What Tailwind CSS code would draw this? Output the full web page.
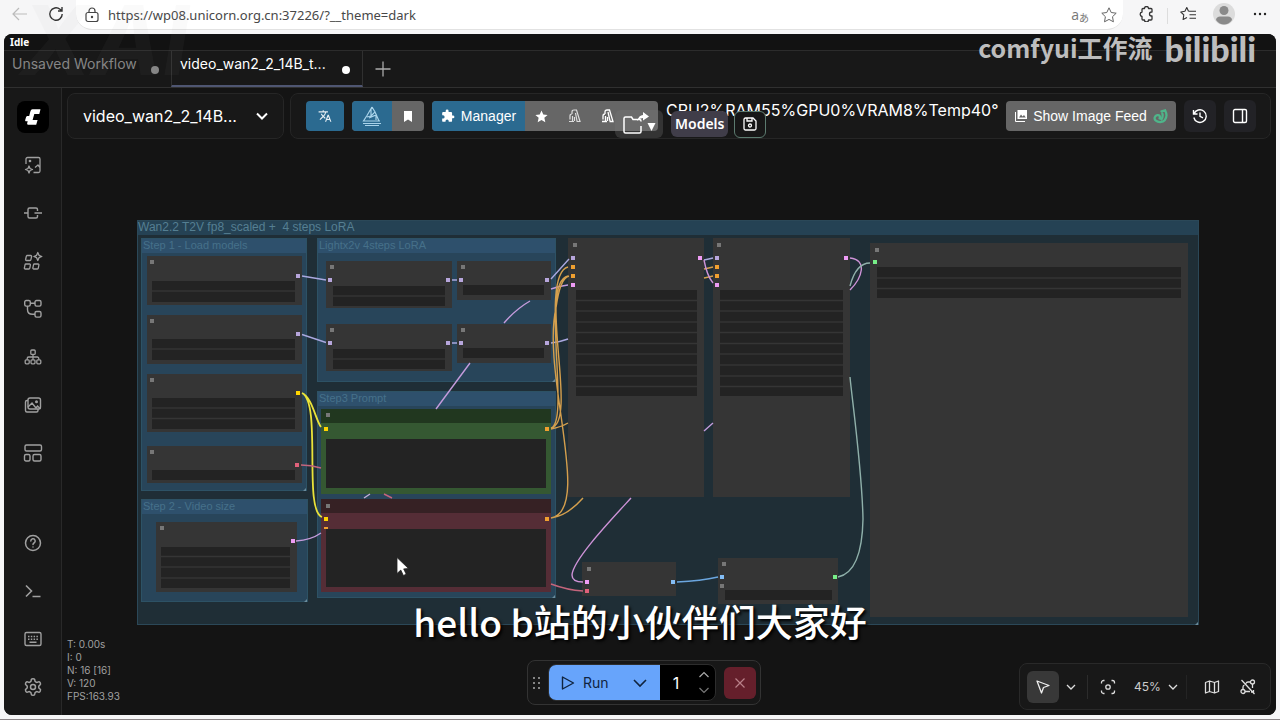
<!DOCTYPE html>
<html lang="en">
<head>
    <meta charset="UTF-8">
    <meta name="viewport" content="width=device-width, initial-scale=1.0">
    <title>ComfyUI</title>
    <script src="https://cdn.jsdelivr.net/npm/@tailwindcss/browser@4"></script>
</head>
<body class="relative h-screen overflow-hidden flex flex-col bg-[#f6f6f7] border-b border-[#8a8486] font-[Inter,'Noto_Sans_CJK_SC',sans-serif] text-white">
    <!-- Browser toolbar -->
    <header class="h-[34px] shrink-0 flex items-start text-[#333] pr-2">
        <button aria-label="Back" class="ml-2 mt-1 w-6 h-5 flex items-center justify-center text-[#bbb]">
            <svg class="w-4 h-4" viewBox="0 0 16 16" fill="none" stroke="currentColor" stroke-width="1.2"><path d="M15 8H1M7 2L1 8l6 6" /></svg>
        </button>
        <button aria-label="Reload" class="ml-3 mt-1 w-6 h-5 flex items-center justify-center">
            <svg class="w-4 h-4" viewBox="0 0 16 16" fill="none" stroke="currentColor" stroke-width="1.4"><path d="M14.2 8A6.2 6.2 0 1 1 12 3.3L14 5M14 1v4h-4" /></svg>
        </button>
        <div class="ml-2 h-[30px] flex-1 flex items-center bg-white rounded-b-2xl border-b border-[#e2e2e2] pl-2 pr-1.5">
            <svg class="w-4 h-4 shrink-0" viewBox="0 0 16 16" fill="none" stroke="#444" stroke-width="1.2"><rect x="2" y="5.5" width="12" height="9" rx="2" /><path d="M5 5.500V4a3 3 0 0 1 6 0v1.500" /><circle cx="8" cy="10" r=".6" fill="#444" /></svg>
            <input aria-label="Address" value="https://wp08.unicorn.org.cn:37226/?__theme=dark"
                class="ml-2 flex-1 min-w-0 outline-none bg-transparent font-['Noto_Sans',sans-serif] text-[13px] leading-5 text-[#484848]">
            <span class="font-['Open_Sans','Noto_Sans_CJK_JP',sans-serif] text-[14px] leading-5 text-[#777]">a<sub class="text-[10px]">あ</sub></span>
            <svg class="ml-3 w-4 h-4" viewBox="0 0 16 16" fill="none" stroke="#666" stroke-linejoin="round"><path d="M8 .8l2.200 4.700 5 .7-3.700 3.500.9 5.100L8 12.400l-4.500 2.400.9-5.100L.8 6.200l5-.7z" /></svg>
        </div>
        <button aria-label="Extensions" class="ml-3 mt-1 w-6 h-5 flex items-center justify-center">
            <svg class="w-4 h-4" viewBox="0 0 16 16" fill="none" stroke="#333" stroke-width="1.3" stroke-linejoin="round"><path d="M4 2.500h1.500a2 2 0 0 1 4 0H12a1 1 0 0 1 1 1v2.500h-.500a2 2 0 0 0 0 4h.500V13a1 1 0 0 1-1 1H9.500a2 2 0 0 1-4 0H4a1 1 0 0 1-1-1v-2.500a2.300 2.300 0 0 1 0-4.500V3.500a1 1 0 0 1 1-1z" /></svg>
        </button>
        <span class="mx-2 mt-2 w-px h-4 bg-[#ddd]"></span>
        <button aria-label="Favorites" class="mt-1 w-6 h-5 flex items-center justify-center">
            <svg class="w-4 h-4" viewBox="0 0 16 16" fill="none" stroke="#333" stroke-width="1.1" stroke-linejoin="round"><path d="M8.500 5.200L6.800 1.500 4.900 5.200.8 6l3 2.900-.7 4.600 3.900-2M8.500 5.200H16M9.500 8.700H16M9.500 12.200H16" /></svg>
        </button>
        <button aria-label="Profile" class="ml-3 mt-1 w-6 h-5 flex items-center justify-center">
            <svg class="w-[22px] h-[22px] shrink-0" viewBox="0 0 22 22"><circle cx="11" cy="11" r="11" fill="#dcdcdc" /><circle cx="11" cy="7.500" r="4.500" fill="#8a8a8a" /><path d="M3 17c0-2 2-3.500 4-3.500h8c2 0 4 1.500 4 3.500-2 3-5 4.500-8 4.500S5 20 3 17z" fill="#8a8a8a" /></svg>
        </button>
        <button aria-label="Settings and more" class="ml-3 mt-1 w-6 h-5 flex items-center justify-center">
            <svg class="w-4 h-4" viewBox="0 0 16 16" fill="#222"><circle cx="3" cy="8" r="1.200" /><circle cx="8" cy="8" r="1.200" /><circle cx="13" cy="8" r="1.200" /></svg>
        </button>
    </header>

    <div class="mx-1 mb-1 flex-1 min-h-0 flex flex-col bg-[#171717] rounded-lg overflow-hidden">
        <!-- Status -->
        <div class="h-[17px] shrink-0 px-1.5 border-b border-[#2c2c2c] bg-[#121212] font-['Noto_Sans',sans-serif] font-bold text-[10px] leading-4">Idle</div>

        <!-- Workflow tabs -->
        <nav class="h-[37px] shrink-0 flex border-b border-[#303030] bg-[#181818] text-[14px] leading-5">
            <button class="w-[167px] pl-2 pr-3 pb-2.5 flex items-center justify-between text-[#858585]">
                <span>Unsaved Workflow</span>
                <span class="mt-3 w-2 h-2 rounded-full bg-[#858585]"></span>
            </button>
            <button class="w-[192px] pl-2 pr-3 pb-2 flex items-center justify-between border-x border-[#303030] border-b-2 border-b-[#4f5672]">
                <span>video_wan2_2_14B_t...</span>
                <span class="mt-3 w-2 h-2 rounded-full bg-white"></span>
            </button>
            <button aria-label="New workflow" class="ml-3 w-4 flex items-center">
                <svg class="w-4 h-4" viewBox="0 0 16 16" fill="none" stroke="#aaa" stroke-width="1.300"><path d="M8 .5v15M.5 8h15" /></svg>
            </button>
        </nav>

        <div class="flex-1 min-h-0 flex">
            <!-- Sidebar -->
            <aside class="w-[58px] shrink-0 pt-[5px] pb-1 flex flex-col items-center border-r border-[#292929] bg-[#181818] text-[#a0a0a0]">
                <button aria-label="Menu" class="w-12 h-12 flex items-center justify-center">
                    <span class="w-8 h-8 rounded-lg bg-black flex items-center justify-center">
                        <svg class="w-4 h-[18px]" viewBox="0 0 16 18" fill="#fff"><path d="M7.500 1.200h8L14.300 6h-5L7.600 12h5L11.200 16.800H3.500c-1 0-1.600-.8-1.300-1.800l.5-1.700H1.200c-.8 0-1.200-.6-1-1.300l.9-2.900c.2-.7.8-1.100 1.500-1.100h1.600l1.100-4.200c.2-1.200 1-2.600 2.200-2.600z" /></svg>
                    </span>
                </button>
                <button aria-label="Assets" class="w-12 h-12 flex items-center justify-center">
                    <svg class="w-5 h-5" viewBox="0 0 20 20" fill="none" stroke="currentColor" stroke-width="1.300" stroke-linejoin="round"><path d="M3 9V4a1.500 1.500 0 0 1 1.500-1.500h11A1.500 1.500 0 0 1 17 4v12a1.500 1.500 0 0 1-1.500 1.500H10.500M17 12.500l-2-2.500-3 2.500M6 11l1 2.500L9.500 14.500 7 15.500 6 18l-1-2.500L2.500 14.500 5 13.500z" /><circle cx="7" cy="6" r=".7" /></svg>
                </button>
                <button aria-label="Nodes" class="w-12 h-12 flex items-center justify-center">
                    <svg class="w-5 h-5" viewBox="0 0 20 20" fill="none" stroke="currentColor" stroke-width="1.400"><path d="M14.500 8V6.500a1.500 1.500 0 0 0-1.500-1.500H6.500A1.500 1.500 0 0 0 5 6.500v7A1.500 1.500 0 0 0 6.500 15H13a1.500 1.500 0 0 0 1.500-1.500V12M1 10h4M11.500 10H19" /></svg>
                </button>
                <button aria-label="Templates" class="w-12 h-12 flex items-center justify-center">
                    <svg class="w-5 h-5" viewBox="0 0 20 20" fill="none" stroke="currentColor" stroke-width="1.300" stroke-linejoin="round"><path d="M4.200 4.500h3.600a.8.8 0 0 1 .8 1l-.7 3.200a1 1 0 0 1-1 .8H3.400a.8.8 0 0 1-.8-1l.7-3.200a1 1 0 0 1 .9-.8zM3 13h3.600a.8.8 0 0 1 .8 1l-.6 3.200a1 1 0 0 1-1 .8H2.200a.8.8 0 0 1-.8-1L2 13.800A1 1 0 0 1 3 13zM11.500 13h3.600a.8.8 0 0 1 .8 1l-.6 3.200a1 1 0 0 1-1 .8h-3.600a.8.8 0 0 1-.8-1l.6-3.200a1 1 0 0 1 1-.8zM14.800 1.500l1.200 2.800 2.800 1.200L16 6.700l-1.200 2.800-1.200-2.800-2.800-1.200 2.800-1.200z" /></svg>
                </button>
                <button aria-label="Workflows" class="w-12 h-12 flex items-center justify-center">
                    <svg class="w-5 h-5" viewBox="0 0 20 20" fill="none" stroke="currentColor" stroke-width="1.400"><rect x="1.700" y="1.500" width="5.600" height="5.600" rx="1.500" /><rect x="12" y="1.500" width="6" height="5.600" rx="1.500" /><rect x="12" y="12.500" width="6" height="5.600" rx="1.500" /><path d="M7.300 4.300H12M4.500 7.100v3.400c0 3 2 4.800 5 4.800H12" /></svg>
                </button>
                <button aria-label="Model library" class="w-12 h-12 flex items-center justify-center">
                    <svg class="w-5 h-5" viewBox="0 0 20 20" fill="none" stroke="currentColor" stroke-width="1.300"><rect x="7.800" y="3" width="4.400" height="4.400" rx="1" /><rect x="2.200" y="12.800" width="4" height="4" rx="1" /><rect x="8" y="12.800" width="4" height="4" rx="1" /><rect x="13.800" y="12.800" width="4" height="4" rx="1" /><path d="M10 7.400v5.400M4.200 12.800V11.500a1.500 1.500 0 0 1 1.500-1.500h8.600a1.500 1.500 0 0 1 1.500 1.500v1.300" /></svg>
                </button>
                <button aria-label="Gallery" class="w-12 h-12 flex items-center justify-center">
                    <svg class="w-5 h-5" viewBox="0 0 20 20" fill="none" stroke="currentColor" stroke-width="1.400"><rect x="5" y="3" width="12.500" height="11" rx="2" /><path d="M5 5.500H4A1.500 1.500 0 0 0 2.500 7v8.500A1.500 1.500 0 0 0 4 17h9.500a1.500 1.500 0 0 0 1.500-1.500V14M5 12l4-4 4 5 1.500-2 3 3" /><circle cx="13.500" cy="6.800" r=".8" /></svg>
                </button>
                <button aria-label="Layouts" class="w-12 h-12 flex items-center justify-center">
                    <svg class="w-5 h-5" viewBox="0 0 20 20" fill="none" stroke="currentColor" stroke-width="1.400"><rect x="2" y="2" width="16.500" height="6" rx="1.500" /><rect x="1.500" y="11.500" width="5.500" height="6.500" rx="1.500" /><rect x="10" y="11.500" width="8" height="6.500" rx="1.500" /></svg>
                </button>
                <button aria-label="Help" class="mt-auto w-12 h-12 flex items-center justify-center">
                    <svg class="w-5 h-5" viewBox="0 0 20 20" fill="none" stroke="currentColor" stroke-width="1.500" stroke-linecap="round"><circle cx="10" cy="10" r="7.500" /><path d="M7.800 8a2.200 2.200 0 1 1 3.200 2c-.7.400-1 .8-1 1.500M10 13.900v.1" /></svg>
                </button>
                <button aria-label="Console" class="w-12 h-12 flex items-center justify-center">
                    <svg class="w-5 h-5" viewBox="0 0 20 20" fill="none" stroke="currentColor" stroke-width="1.600"><path d="M3 4.500L8.500 10 3 15.500M9.500 15.500H17.500" /></svg>
                </button>
                <button aria-label="Shortcuts" class="w-12 h-12 flex items-center justify-center">
                    <svg class="w-5 h-5" viewBox="0 0 20 20" fill="none" stroke="currentColor" stroke-width="1.400"><rect x="2" y="3.500" width="16" height="13" rx="1.500" /><path d="M5 7.500h10M5 10.300h10" stroke-dasharray="1.500 1.300" /><path d="M6.500 13.300h7" /></svg>
                </button>
                <button aria-label="Settings" class="w-12 h-12 flex items-center justify-center">
                    <svg class="w-5 h-5" viewBox="0 0 24 24" fill="none" stroke="currentColor" stroke-width="1.800" stroke-linejoin="round"><path d="M12.220 2h-.440a2 2 0 0 0-2 2v.180a2 2 0 0 1-1 1.730l-.430.250a2 2 0 0 1-2 0l-.150-.080a2 2 0 0 0-2.730.730l-.220.380a2 2 0 0 0 .730 2.730l.150.100a2 2 0 0 1 1 1.720v.510a2 2 0 0 1-1 1.740l-.150.090a2 2 0 0 0-.730 2.730l.220.380a2 2 0 0 0 2.730.730l.150-.080a2 2 0 0 1 2 0l.430.250a2 2 0 0 1 1 1.730V20a2 2 0 0 0 2 2h.440a2 2 0 0 0 2-2v-.180a2 2 0 0 1 1-1.730l.430-.250a2 2 0 0 1 2 0l.150.080a2 2 0 0 0 2.730-.730l.220-.390a2 2 0 0 0-.730-2.730l-.150-.080a2 2 0 0 1-1-1.740v-.500a2 2 0 0 1 1-1.740l.150-.090a2 2 0 0 0 .730-2.730l-.220-.380a2 2 0 0 0-2.730-.730l-.150.080a2 2 0 0 1-2 0l-.430-.250a2 2 0 0 1-1-1.730V4a2 2 0 0 0-2-2z" /><circle cx="12" cy="12" r="3" /></svg>
                </button>
            </aside>

            <main class="relative flex-1 min-w-0 overflow-hidden bg-[#141414]">
                <!-- Graph -->
                <svg class="absolute left-0 top-0 w-[1218px] h-[632px]" viewBox="62 88 1218 632" fill="none" role="img" aria-label="Workflow graph">
                    <!-- groups -->
                    <rect x="137" y="220" width="1062" height="405" fill="#1f2e36" />
                    <rect x="137" y="220" width="1062" height="15" fill="#254254" />
                    <rect x="137.500" y="220.500" width="1061" height="404" stroke="#2b4858" />
                    <g fill="#28455a" stroke="#2d5265">
                        <rect x="141.500" y="238.500" width="165" height="252" />
                        <rect x="141.500" y="499.500" width="166" height="102" />
                        <rect x="317.500" y="238.500" width="238" height="143" />
                        <rect x="317.500" y="391.500" width="238" height="206" />
                    </g>
                    <path fill="#2e506c" d="M142 239h164v14H142zM142 500h165v14H142zM318 239h237v14H318zM318 392h237v14H318z" />
                    <path fill="#6b8b9b" d="M306 488v3h-3zM307 599v3h-3zM555 379v3h-3zM555 595v3h-3zM1198 622v3h-3z" />
                    <g class="font-['Liberation_Sans',sans-serif] text-[11px]" fill="#46708a">
                        <text x="138" y="231" fill="#557f92" xml:space="preserve" class="text-[12px]">Wan2.2 T2V fp8_scaled +  4 steps LoRA</text>
                        <text x="143" y="249">Step 1 - Load models</text>
                        <text x="319" y="249">Lightx2v 4steps LoRA</text>
                        <text x="319" y="402">Step3 Prompt</text>
                        <text x="143" y="510">Step 2 - Video size</text>
                    </g>

                    <!-- node bodies -->
                    <g fill="#353535">
                        <rect x="147" y="256" width="155" height="49" /><rect x="147" y="315" width="155" height="49" />
                        <rect x="147" y="374" width="155" height="58" /><rect x="147" y="446" width="155" height="37" />
                        <rect x="156" y="522" width="141" height="70" />
                        <rect x="326" y="261" width="126" height="47" /><rect x="457" y="261" width="94" height="39" />
                        <rect x="326" y="324" width="126" height="47" /><rect x="457" y="324" width="94" height="39" />
                        <rect x="568" y="238" width="136" height="259" /><rect x="713" y="238" width="137" height="259" />
                        <rect x="870" y="243" width="318" height="374" />
                        <rect x="582" y="562" width="94" height="34" /><rect x="718" y="558" width="120" height="46" />
                    </g>
                    <path fill="#21371f" d="M321 409h230v14H321z" /><path fill="#355832" d="M321 423h230v71H321z" />
                    <path fill="#362124" d="M321 499h230v14H321z" /><path fill="#552d36" d="M321 513h230v79H321z" />

                    <!-- widgets -->
                    <path fill="#232323" d="M152 281h143v21H152zM152 339h143v21H152zM152 398h143v31H152zM152 470h143v10H152zM161 547h129v41H161zM333 286h112v20H333zM463 285h81v10H463zM333 349h112v20H333zM463 348h81v10H463zM576 290h121v106H576zM720 290h123v106H720zM877 267h304v31H877zM725 590h107v10H725zM326 439h220v49H326zM326 529h220v58H326z" />
                    <path stroke="#353535" stroke-width="1.300" d="M152 291h143M152 349h143M152 408h143M152 418.500h143M161 556.500h129M161 567h129M161 578h129M333 296h112M333 359h112M877 278h304M877 288.500h304M576 300.500h121M576 311h121M576 322h121M576 332.500h121M576 343.500h121M576 354h121M576 365h121M576 376h121M576 386.500h121M720 300.500h123M720 311h123M720 322h123M720 332.500h123M720 343.500h123M720 354h123M720 365h123M720 376h123M720 386.500h123" />

                    <!-- links -->
                    <g stroke-width="1.400">
                        <path stroke="#aaa8df" d="M302 276l24 4M302 334.500l24 8M452 280h5M452 343h5M551 279l18-20M551 343q9-1 17-4M704 260q5-1 9-2" />
                        <path stroke="#c49bdc" d="M530 301q-14 8-26 22M470 363l-34 46M296 541q15-1 25-8M551 289q8-3 17-4M704 431l9-8" />
                        <path stroke="#e9e239" stroke-width="1.800" d="M302 393c10 4 14 28 19 34M302 393c20 10 1 117 20 124" />
                        <path stroke="#d49f4d" d="M551 428c20-6-12-154 17-161M551 428c28-6-14-144 17-152M551 518c42-8-10-145 5-210q4-30 13-32M551 429q10-2 17-6M551 518q16-2 32-20M704 269q5-1 9-2M704 278q5-1 9-2" />
                        <path stroke="#ce93d8" d="M704 260q3 16 9 23M850 258c18 2 12 20 0 32M631 498c-22 24-58 62-59 77q0 7 11 7" />
                        <path stroke="#c4657c" d="M301 465q10 0 20 3M551 584q16 6 32 7M384 494l8 4" />
                        <path stroke="#c5b0d8" d="M364 498l6-4" />
                        <path stroke="#6ba6df" d="M677 582q24-1 41-5" />
                        <path stroke="#8fb0aa" d="M850 286q6-23 20-23M850 377c2 22 12 92 13 142q-1 53-25 58" />
                    </g>

                    <!-- slots -->
                    <path fill="#777" d="M150 260h4v4h-4zM150 319h4v4h-4zM150 378h4v4h-4zM150 450h4v4h-4zM160 526h4v4h-4zM330 265h4v4h-4zM461 265h4v4h-4zM330 328h4v4h-4zM461 328h4v4h-4zM326 413h4v4h-4zM326 504h4v4h-4zM573 243h4v4h-4zM717 243h4v4h-4zM875 248h4v4h-4zM587 567h4v4h-4zM722 562h4v4h-4zM720 584h4v4h-4z" />
                    <path fill="#b7a6dc" d="M296 274h4v4h-4zM296 332h4v4h-4zM328 278h4v4h-4zM446 278h4v4h-4zM459 278h4v4h-4zM545 278h4v4h-4zM328 341h4v4h-4zM446 341h4v4h-4zM459 341h4v4h-4zM545 341h4v4h-4zM571 256h4v4h-4zM715 256h4v4h-4z" />
                    <path fill="#ffd500" d="M296 391h4v4h-4zM324 427h4v4h-4zM324 517h4v4h-4z" />
                    <path fill="#f0a030" d="M545 427h4v4h-4zM545 517h4v4h-4zM571 265h4v4h-4zM571 274h4v4h-4zM715 265h4v4h-4zM715 274h4v4h-4zM324 527h4v2h-4z" />
                    <path fill="#ee9cf5" d="M291 539h4v4h-4zM571 283h4v4h-4zM715 283h4v4h-4zM698 256h4v4h-4zM844 256h4v4h-4zM585 580h4v4h-4z" />
                    <path fill="#e0617a" d="M295 463h4v4h-4zM585 589h4v4h-4z" />
                    <path fill="#83bdf5" d="M671 580h4v4h-4zM720 575h4v4h-4z" />
                    <path fill="#77ee88" d="M833 575h4v4h-4zM873 260h4v4h-4z" />

                    <!-- pointer -->
                    <path fill="#fff" stroke="#222" stroke-width=".8" d="M397 557.500v16l3.800-3.400 2.600 5.400 2.800-1.300-2.500-5.300 4.800-.4z" />
                </svg>

                <!-- Top bar -->
                <div class="relative p-[5px] flex gap-1.5">
                    <button class="w-[217px] h-[46px] px-[15px] flex items-center justify-between rounded-lg border border-[#262626] bg-[#181818] text-[16px] leading-6">
                        <span>video_wan2_2_14B...</span>
                        <svg class="w-3 h-3" viewBox="0 0 12 12" fill="none" stroke="#fff" stroke-width="2"><path d="M1 3.500l5 5 5-5" /></svg>
                    </button>
                    <div class="relative flex-1 min-w-0 h-[46px] pl-[15px] pr-[18px] flex items-center gap-2 rounded-lg border border-[#262626] bg-[#181818] font-['Liberation_Sans',sans-serif] text-[15px] leading-5">
                        <button aria-label="Translate" class="shrink-0 w-[38px] h-[30px] rounded bg-[#2b6a90] flex items-center justify-center">
                            <svg class="w-[14px] h-[14px]" viewBox="0 0 24 24" fill="#e6eef3"><path d="M12.870 15.070l-2.540-2.510.030-.030A17.520 17.520 0 0 0 14.070 6H17V4h-7V2H8v2H1v2h11.170C11.500 7.920 10.440 9.750 9 11.350 8.070 10.320 7.300 9.190 6.690 8h-2c.730 1.630 1.730 3.170 2.980 4.560l-5.090 5.020L4 19l5-5 3.110 3.110.760-2.040zM18.500 10h-2L12 22h2l1.120-3h4.750L21 22h2l-4.500-12zm-2.620 7l1.620-4.330L19.120 17h-3.240z" /></svg>
                        </button>
                        <div class="shrink-0 flex rounded overflow-hidden bg-[#666]">
                            <button aria-label="Studio" class="w-10 h-[30px] bg-[#2b6a90] flex items-center justify-center">
                                <svg class="w-5 h-5" viewBox="0 0 20 20" fill="none" stroke="#a9d3ea" stroke-width="1.200"><path d="M10 1L5 9.500 1.500 15H18M10 1l3 5-4 4-4 1M13 6l4 9M7 12l7-3v5M1 17.500h18M3 19.500h14M9 3v7" /></svg>
                            </button>
                            <button aria-label="Bookmark" class="w-8 h-[30px] flex items-center justify-center">
                                <svg class="w-3 h-3" viewBox="0 0 12 12" fill="#fff"><path d="M2 1h8v11L6 9.500 2 12z" /></svg>
                            </button>
                        </div>
                        <div class="shrink-0 flex rounded overflow-hidden bg-[#666]">
                            <button class="w-[93px] h-[30px] bg-[#2b6a90] flex items-center justify-center gap-1.5 text-[14px]">
                                <svg class="w-[14px] h-[14px]" viewBox="0 0 24 24" fill="#fff"><path d="M20.500 11H19V7a2 2 0 0 0-2-2h-4V3.500a2.500 2.500 0 0 0-5 0V5H4a2 2 0 0 0-2 2v3.800h1.500a2.700 2.700 0 0 1 0 5.400H2V20a2 2 0 0 0 2 2h3.800v-1.500a2.700 2.700 0 0 1 5.400 0V22H17a2 2 0 0 0 2-2v-4h1.500a2.500 2.500 0 0 0 0-5z" /></svg>
                                Manager
                            </button>
                            <button aria-label="Favorite" class="w-[33px] h-[30px] flex items-center justify-center">
                                <svg class="w-[13px] h-[13px]" viewBox="0 0 16 16" fill="#fff"><path d="M8 .5l2.200 5 5.300.5-4 3.600 1.200 5.400L8 12.200 3.300 15l1.200-5.400-4-3.600 5.300-.5z" /></svg>
                            </button>
                            <button aria-label="Unload models" class="w-[33px] h-[30px] flex items-center justify-center">
                                <svg class="w-[14px] h-[14px]" viewBox="0 0 14 14" fill="none" stroke="#ddd" stroke-width="1.200"><path d="M1 12.500h5M2 10.500V7q0-2 2-2M4.500 12V7M6.500 12V8M4 5V3q0-2 2-2h2.500L12 12.500H8.500M9 12L7.500 4" /></svg>
                            </button>
                            <button aria-label="Free memory" class="w-[33px] h-[30px] flex items-center justify-center">
                                <svg class="w-[14px] h-[14px]" viewBox="0 0 14 14" fill="none" stroke="#fff" stroke-width="1.300"><path d="M1 12.500h5M2 10.500V7q0-2 2-2M4.500 12V7M6.500 12V8M4 5V3q0-2 2-2h2.500L12 12.500H8.500M9 12L7 3" /></svg>
                            </button>
                            <span class="w-[34px]"></span>
                        </div>
                        <span class="shrink-0 pb-3 font-[Inter,sans-serif] text-[16px] whitespace-nowrap">CPU2%RAM55%GPU0%VRAM8%Temp40°</span>
                        <button class="ml-auto shrink-0 w-[170px] h-[30px] rounded bg-[#666] flex items-center justify-center gap-1.5 text-[14px]">
                            <svg class="w-3 h-3" viewBox="0 0 12 12"><path fill="#fff" d="M2.500 0H12v9H2.500z" /><path fill="#666" d="M4 7.500l2-3 1.500 2L9 5l1.800 2.500z" /><path stroke="#fff" fill="none" d="M.5 2v9.500H10" /></svg>
                            Show Image Feed
                            <svg class="w-[15px] h-[15px]" viewBox="0 0 16 16" fill="none" stroke="#4fb58a" stroke-width="2.400" stroke-linecap="round"><path d="M9 2.500l4-1c2 4 1.500 8-.5 10.500s-7 2.500-9.500.5-1-5.500 1.500-6 3.500 1.500 2.500 3.500M10 5q1 3-1 6" /></svg>
                        </button>
                        <button aria-label="History" class="shrink-0 w-8 h-8 rounded-md bg-[#222226] flex items-center justify-center">
                            <svg class="w-4 h-4" viewBox="0 0 16 16" fill="none" stroke="#fff" stroke-width="1.400"><path d="M1.500 2v4h4M2 6a6.300 6.300 0 1 1-.2 3.500M8 4.500V8.300l3 1.500" /></svg>
                        </button>
                        <button aria-label="Toggle panel" class="shrink-0 w-8 h-8 rounded-md bg-[#222226] flex items-center justify-center">
                            <svg class="w-4 h-4" viewBox="0 0 16 16" fill="none" stroke="#fff" stroke-width="1.400"><rect x="1.500" y="1.500" width="13" height="13" rx="1.500" /><path d="M10.500 1.500v13" /></svg>
                        </button>

                        <!-- Floating model tools -->
                        <div class="absolute left-[324px] top-4 flex items-center">
                            <button aria-label="Open folder" class="w-12 h-7 pl-2 rounded-md bg-[#777]/30 flex items-center">
                                <svg class="w-9 h-6" viewBox="0 0 36 24" fill="none" stroke="#fff" stroke-width="1.500"><path d="M18 9.500V9a1.500 1.500 0 0 0-1.500-1.500H10L8.500 5h-6A1.500 1.500 0 0 0 1 6.500v13A1.500 1.500 0 0 0 2.500 21h14a1.500 1.500 0 0 0 1.500-1.500V14" /><path fill="#fff" stroke="none" d="M14 9q2-6 6-6V0l6 4.500-6 4V6q-3 0-6 3zM24.500 11h8l-4 8z" /></svg>
                            </button>
                            <button class="ml-2 h-[26px] px-1 rounded-md bg-[#403d49] font-['Noto_Sans',sans-serif] font-semibold text-[14px]">Models</button>
                            <button aria-label="Save" class="ml-1.5 w-8 h-[27px] rounded-md border border-[#5c7b6f] bg-[#171717] flex items-center justify-center">
                                <svg class="w-[14px] h-[14px]" viewBox="0 0 14 14" fill="none" stroke="#fff" stroke-width="1.300"><path d="M1 2.500A1.500 1.500 0 0 1 2.500 1H10l3 3v7.500a1.500 1.500 0 0 1-1.500 1.500h-9A1.500 1.500 0 0 1 1 11.500zM4 1v3h5V1" /><circle cx="7" cy="8.500" r="1.500" /></svg>
                            </button>
                        </div>
                    </div>
                </div>

                <!-- Stats -->
                <div class="absolute left-[5px] bottom-3 text-[10px] leading-[13px] text-[#a0a0a0]">
                    <p>T: 0.00s</p>
                    <p>I: 0</p>
                    <p>N: 16 [16]</p>
                    <p>V: 120</p>
                    <p>FPS:163.93</p>
                </div>

                <!-- Queue bar -->
                <div class="absolute left-[465px] bottom-[10px] h-[45px] px-1 flex items-center rounded-lg border border-[#333] bg-[#171717]">
                    <svg class="w-2.5 h-4 mr-1.5" viewBox="0 0 10 16" fill="#aaa"><circle cx="2" cy="3" r="1" /><circle cx="2" cy="8" r="1" /><circle cx="2" cy="13" r="1" /><circle cx="7" cy="3" r="1" /><circle cx="7" cy="8" r="1" /><circle cx="7" cy="13" r="1" /></svg>
                    <div class="flex h-[37px] rounded-lg overflow-hidden border border-[#2d2d2d] bg-black">
                        <button class="w-[76px] flex items-center pl-3 gap-2 bg-[#67a4fb] text-[#10243f] text-[14px]">
                            <svg class="w-[14px] h-[14px]" viewBox="0 0 14 14" fill="none" stroke="#10243f" stroke-width="1.400" stroke-linejoin="round"><path d="M1.500 1v12L12.500 7z" /></svg>
                            Run
                        </button>
                        <button aria-label="Run options" class="w-[35px] pr-1.5 flex items-center justify-center bg-[#67a4fb]">
                            <svg class="w-[14px] h-[14px]" viewBox="0 0 14 14" fill="none" stroke="#10243f" stroke-width="1.600"><path d="M1 4l6 6 6-6" /></svg>
                        </button>
                        <input aria-label="Batch count" value="1" class="w-8 text-center bg-transparent outline-none text-[16px]">
                        <div class="w-[23px] flex flex-col justify-between py-1">
                            <button aria-label="Increase"><svg class="mx-auto w-3 h-3" viewBox="0 0 12 12" fill="none" stroke="#aaa" stroke-width="1.200"><path d="M1.500 8L6 3.500 10.500 8" /></svg></button>
                            <button aria-label="Decrease"><svg class="mx-auto w-3 h-3" viewBox="0 0 12 12" fill="none" stroke="#777" stroke-width="1.200"><path d="M1.500 4L6 8.500 10.500 4" /></svg></button>
                        </div>
                    </div>
                    <button aria-label="Cancel" class="ml-2 w-8 h-8 rounded-md bg-[#651f2b] flex items-center justify-center">
                        <svg class="w-3 h-3" viewBox="0 0 12 12" fill="none" stroke="#b98189" stroke-width="1.200"><path d="M1.500 1.500l9 9M10.500 1.500l-9 9" /></svg>
                    </button>
                </div>

                <!-- View controls -->
                <div class="absolute right-[5px] bottom-[5px] w-[252px] h-[47px] pl-[7px] flex items-center rounded-lg border border-[#292929] bg-[#181818] text-[12px]">
                    <button aria-label="Select" class="w-8 h-8 rounded-md bg-[#383838] flex items-center justify-center">
                        <svg class="w-4 h-4" viewBox="0 0 16 16" fill="none" stroke="#eee" stroke-width="1.300" stroke-linejoin="round"><path d="M2 2l12 4.500-5.500 2-2 5.500z" /></svg>
                    </button>
                    <button aria-label="Pointer options" class="ml-1 w-4 flex justify-center">
                        <svg class="w-2.5 h-2.5" viewBox="0 0 10 10" fill="none" stroke="#ddd" stroke-width="1.300"><path d="M1 3l4 4 4-4" /></svg>
                    </button>
                    <span class="ml-2 w-px h-6 bg-[#2c2c2c]"></span>
                    <button aria-label="Fit view" class="ml-3 w-4">
                        <svg class="w-4 h-4" viewBox="0 0 16 16" fill="none" stroke="#ddd" stroke-width="1.300"><path d="M1.500 4.500v-1a2 2 0 0 1 2-2h1M11.500 1.500h1a2 2 0 0 1 2 2v1M14.500 11.500v1a2 2 0 0 1-2 2h-1M4.500 14.500h-1a2 2 0 0 1-2-2v-1" /><circle cx="8" cy="8" r="2.200" /></svg>
                    </button>
                    <button class="ml-[18px] flex items-center gap-[7px] text-[#ccc]">45%
                        <svg class="w-2.5 h-2.5" viewBox="0 0 10 10" fill="none" stroke="#ddd" stroke-width="1.300"><path d="M1 3l4 4 4-4" /></svg>
                    </button>
                    <span class="ml-2 w-px h-6 bg-[#242424]"></span>
                    <button aria-label="Minimap" class="ml-[17px] w-4">
                        <svg class="w-4 h-4" viewBox="0 0 16 16" fill="none" stroke="#ddd" stroke-width="1.300" stroke-linejoin="round"><path d="M1.500 3.500L5.500 2l5 1.500L14.500 2v10.500L10.500 14l-5-1.500-4 1.500zM5.500 2v10.500M10.500 3.500V14" /></svg>
                    </button>
                    <button aria-label="Hide links" class="ml-5 w-4">
                        <svg class="w-4 h-4" viewBox="0 0 16 16" fill="none" stroke="#ddd" stroke-width="1.300"><circle cx="12.500" cy="3" r="2" /><circle cx="3" cy="12.500" r="2" /><path d="M1.500 1l13 14M10.500 3H8q-1.500 0-2 1.500M3 10.500V8q0-1.500 1.500-2M5 12.500h5M12.500 5v4M11 13h2.500v-2" /></svg>
                    </button>
                </div>
            </main>
        </div>
    </div>

    <!-- Video overlay: captions and watermark -->
    <p class="absolute inset-x-0 top-[594px] text-center font-['Noto_Sans_CJK_SC',sans-serif] font-medium text-[37px] leading-[54px] [text-shadow:2px_2px_3px_#000] pointer-events-none">hello b站的小伙伴们大家好</p>
    <div class="absolute right-6 top-8 flex items-center gap-3 text-[#bdbdbd] pointer-events-none">
        <span class="pb-1 font-['Noto_Sans_CJK_SC',sans-serif] font-bold text-[25px] leading-[30px]">comfyui工作流</span>
        <span class="font-[Lato,sans-serif] font-black text-[34px] leading-[34px]">bilibili</span>
    </div>
    <div class="absolute left-5 -top-2 font-[Inter,sans-serif] font-bold italic text-[96px] leading-[96px] text-[#999]/5 pointer-events-none" aria-hidden="true">XAI</div>
</body>
</html>
